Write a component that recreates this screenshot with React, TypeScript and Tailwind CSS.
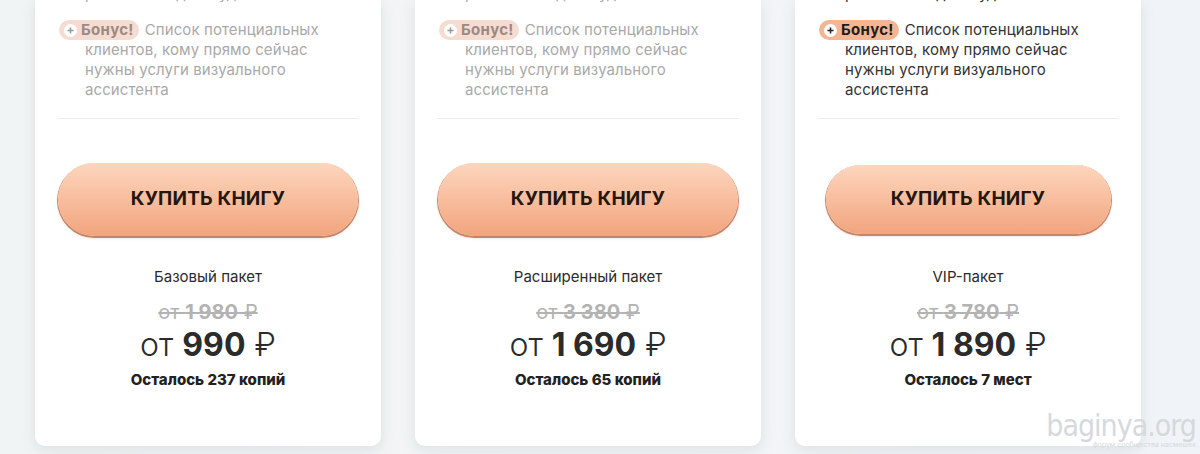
import React from 'react'

type Plan = {
  name: string
  oldPrice: string
  price: string
  left: string
  active?: boolean
}

const plans: Plan[] = [
  { name: 'Базовый пакет', oldPrice: '1 980', price: '990', left: 'Осталось 237 копий' },
  { name: 'Расширенный пакет', oldPrice: '3 380', price: '1 690', left: 'Осталось 65 копий' },
  { name: 'VIP-пакет', oldPrice: '3 780', price: '1 890', left: 'Осталось 7 мест', active: true },
]

function PlusDot({ active }: { active?: boolean }) {
  return (
    <span
      className={
        'flex h-[13px] w-[13px] items-center justify-center rounded-full bg-white ' +
        (active ? 'text-[#222]' : 'text-[#999]')
      }
    >
      <svg width="7" height="7" viewBox="0 0 8 8">
        <path d="M4 0.5v7M0.5 4h7" stroke="currentColor" strokeWidth="1.8" />
      </svg>
    </span>
  )
}

function PlanCard({ plan }: { plan: Plan }) {
  const faded = !plan.active
  return (
    <div className="flex w-[346px] flex-col rounded-b-[10px] bg-white pb-[56px] shadow-[0_4px_14px_rgba(120,140,150,0.18)]">
      <div className="px-[22px]">
        <p className={'-mt-[16px] pl-[28px] text-[15px] leading-[20px] ' + (faded ? 'text-[#aaa]' : 'text-[#333]')}>
          работать из дома удаленно
        </p>
        <div className="pt-[16px] pb-[18px] pl-[2px]">
          <p
            className={
              'w-[272px] pl-[26px] -indent-[26px] text-[15px] leading-[20px] tracking-[0.1px] ' +
              (faded ? 'text-[#a9a9a9]' : 'text-[#333]')
            }
          >
            <span
              className={
                'mr-[6px] inline-flex h-[20px] items-center gap-[4px] rounded-full pl-[5px] pr-[5px] indent-0 align-top ' +
                (faded ? 'bg-[#f6dcd0]' : 'bg-[#f4b593]')
              }
            >
              <PlusDot active={plan.active} />
              <span className={'font-bold tracking-[0.3px] ' + (faded ? 'text-[#9a8a84]' : 'text-[#1d1d1d]')}>Бонус!</span>
            </span>
            Список потенциальных клиентов, кому прямо сейчас нужны услуги визуального ассистента
          </p>
        </div>
        <div className="h-px bg-[#ececec]" />
      </div>

      <div className={'flex justify-center ' + (plan.active ? 'pt-[46px] pb-[33px]' : 'pt-[44px] pb-[31px]')}>
        <button
          className={
            'rounded-full bg-gradient-to-b from-[#fdd6bd] to-[#f1a47e] text-[19px] font-bold tracking-[0.2px] text-[#24170f] shadow-[0_1px_0_1px_#c88466,0_2px_3px_rgba(150,80,40,0.25)] ' +
            (plan.active ? 'h-[69px] w-[285px]' : 'h-[73px] w-[300px]')
          }
        >
          КУПИТЬ КНИГУ
        </button>
      </div>

      <div className="flex flex-col items-center text-[#2b2b2b]">
        <p className="text-[15px] leading-[20px]">{plan.name}</p>
        <p className="mt-[13px] text-[20px] leading-[24px] text-[#b3b3b3] line-through decoration-[1.5px]">
          от <span className="font-bold">{plan.oldPrice}</span> ₽
        </p>
        <p className="mt-[1px] text-[32px] leading-[40px] text-[#2b2b2b]">
          <span className="font-light">от</span> <span className="font-bold">{plan.price}</span>{' '}
          <span className="font-light">₽</span>
        </p>
        <p className="mt-[5px] text-[15px] font-extrabold leading-[20px] text-[#222]">{plan.left}</p>
      </div>
    </div>
  )
}

export default function App() {
  return (
    <div
      className="relative h-[454px] w-[1200px] overflow-hidden bg-gradient-to-r from-[#f1f4f4] via-[#f3f5f6] to-[#f0f4f8]"
      style={{ fontFamily: 'Inter, "Noto Sans", sans-serif' }}
    >
      <div className="flex gap-[34px] pl-[35px]">
        {plans.map((p) => (
          <PlanCard key={p.name} plan={p} />
        ))}
      </div>
      <div className="absolute right-[4px] bottom-[6px] flex flex-col items-end leading-none text-[#d6d9dc]">
        <span className="text-[30px] tracking-[-1px]" style={{ fontFamily: '"Liberation Sans Narrow", "DejaVu Sans Condensed", sans-serif' }}>
          baginya.org
        </span>
        <span className="text-[7px]">форум сообщества насмешек</span>
      </div>
    </div>
  )
}
